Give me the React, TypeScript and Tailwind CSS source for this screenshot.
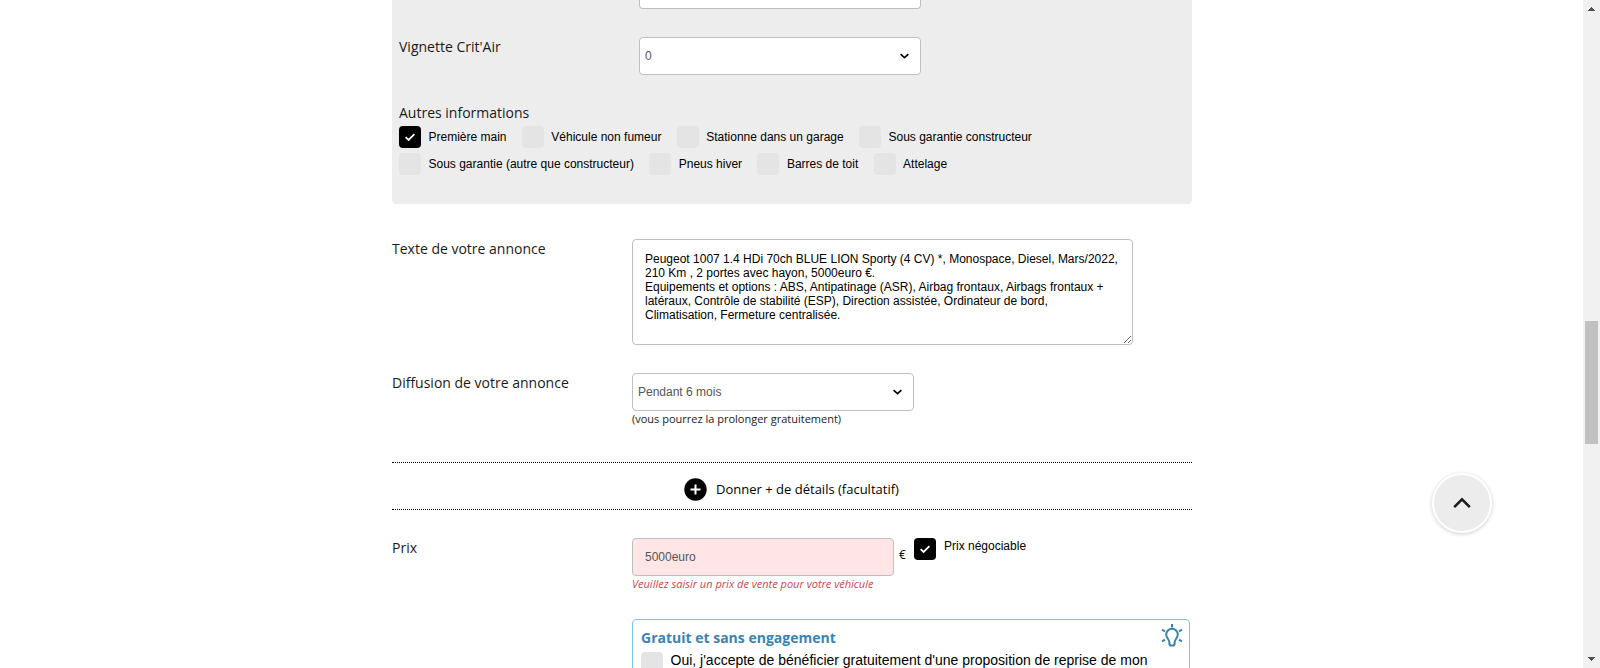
import React from "react";

const label = "w-[240px] shrink-0 font-['Open_Sans',sans-serif] text-[14px] leading-[20px] text-[#1a1a1a]";

function Check({ checked = false }: { checked?: boolean }) {
  return (
    <span
      className={
        checked
          ? "flex size-[22px] shrink-0 items-center justify-center rounded-[4px] bg-black"
          : "size-[22px] shrink-0 rounded-[4px] bg-[#e4e4e4]"
      }
    >
      {checked && (
        <svg width="12" height="10" viewBox="0 0 12 10" fill="none" stroke="#fff" strokeWidth="1.8">
          <path d="M1.6 5.2 4.6 8 10.4 2.2" />
        </svg>
      )}
    </span>
  );
}

function Option({ text, checked }: { text: string; checked?: boolean }) {
  return (
    <label className="flex gap-[7.500px]">
      <Check checked={checked} />
      <span className="whitespace-nowrap text-[12px] leading-[22px] text-black">{text}</span>
    </label>
  );
}

function Select({ value }: { value: string }) {
  return (
    <div className="flex h-[38px] w-[282px] items-center justify-between rounded-[4px] border border-[#bfbfbf] bg-white pl-[5px] pr-[11px] text-[12px] text-[#555]">
      <span>{value}</span>
      <svg width="9" height="6" viewBox="0 0 9 6" fill="none" stroke="#000" strokeWidth="1.700">
        <path d="M0.600 1.200 4.500 4.600 8.400 1.200" />
      </svg>
    </div>
  );
}

function Scrollbar() {
  return (
    <div className="flex w-[17px] shrink-0 flex-col items-center bg-[#f1f1f1]">
      <svg className="mt-[7px] shrink-0" width="7" height="4" viewBox="0 0 7 4" fill="#505050" shapeRendering="crispEdges">
        <path d="M3 0h1v1h1v1h1v1h1v1H0V3h1V2h1V1h1z" />
      </svg>
      <div className="mt-[310px] h-[123px] w-[13px] shrink-0 bg-[#c1c1c1]" />
      <svg className="mb-[7px] mt-auto shrink-0" width="7" height="4" viewBox="0 0 7 4" fill="#505050" shapeRendering="crispEdges">
        <path d="M0 0h7v1H6v1H5v1H4v1H3V3H2V2H1V1H0z" />
      </svg>
    </div>
  );
}

const AD_TEXT = `Peugeot 1007 1.4 HDi 70ch BLUE LION Sporty (4 CV) *, Monospace, Diesel, Mars/2022, 210 Km , 2 portes avec hayon, 5000euro €.
Equipements et options : ABS, Antipatinage (ASR), Airbag frontaux, Airbags frontaux + latéraux, Contrôle de stabilité (ESP), Direction assistée, Ordinateur de bord, Climatisation, Fermeture centralisée.`;

export default function App() {
  return (
    <div className="relative flex h-[668px] w-[1600px] overflow-hidden bg-white font-['Liberation_Sans',Arial,sans-serif]">
      <main className="flex-1 pl-[392px]">
        <div className="w-[800px]">
          <section className="h-[204px] rounded-b-[4px] bg-[#ededed] px-[7px]">
            <div className="ml-[240px] h-[9px] w-[282px] rounded-b-[4px] border border-t-0 border-[#bfbfbf] bg-white" />
            <div className="mt-[28px] flex h-[38px]">
              <span className={label}>Vignette Crit'Air</span>
              <Select value="0" />
            </div>
            <div className="mt-[28px] font-['Open_Sans',sans-serif] text-[14px] leading-[20px] text-[#1a1a1a]">
              Autres informations
            </div>
            <div className="mt-[3px] flex gap-[15.300px]">
              <Option text="Première main" checked />
              <Option text="Véhicule non fumeur" />
              <Option text="Stationne dans un garage" />
              <Option text="Sous garantie constructeur" />
            </div>
            <div className="mt-[5px] flex gap-[15.300px]">
              <Option text="Sous garantie (autre que constructeur)" />
              <Option text="Pneus hiver" />
              <Option text="Barres de toit" />
              <Option text="Attelage" />
            </div>
          </section>

          <div className="mt-[35px] flex">
            <span className={label}>Texte de votre annonce</span>
            <textarea
              className="h-[106px] w-[501px] resize overflow-hidden rounded-[4px] border border-[#bfbfbf] bg-white px-[12px] py-[12px] text-[12px] leading-[14px] text-black"
              defaultValue={AD_TEXT}
            />
          </div>

          <div className="mt-[28px] flex h-[89px]">
            <span className={label}>Diffusion de votre annonce</span>
            <div>
              <Select value="Pendant 6 mois" />
              <p className="font-['Open_Sans',sans-serif] text-[11px] leading-[16px] text-[#1a1a1a]">
                (vous pourrez la prolonger gratuitement)
              </p>
            </div>
          </div>

          <div className="flex h-[48px] items-center justify-center border-y border-dotted border-black pr-px pt-[6px]">
            <svg width="23" height="23" viewBox="0 0 23 23">
              <circle cx="11.5" cy="11.5" r="11.2" fill="#000" />
              <path d="M11.5 6.5v10M6.5 11.5h10" stroke="#fff" strokeWidth="2" />
            </svg>
            <span className="ml-[9px] font-['Open_Sans',sans-serif] text-[13px] leading-[20px] text-black">
              Donner + de détails (facultatif)
            </span>
          </div>

          <div className="mt-[28px] flex h-[81px]">
            <span className={label}>Prix</span>
            <div>
              <div className="flex">
                <input
                  className="h-[38px] w-[262px] rounded-[4px] border border-[#bfbfbf] bg-[#ffe5e5] px-[12px] text-[12px] text-[#555]"
                  defaultValue="5000euro"
                />
                <span className="ml-[5px] w-[15px] pt-[9px] font-['Open_Sans',sans-serif] text-[12px] leading-[16px] text-black">€</span>
                <Check checked />
                <span className="ml-[8px] text-[12px] leading-[17px] text-black">Prix négociable</span>
              </div>
              <p className="font-['Open_Sans',sans-serif] text-[11px] italic leading-[16px] text-[#d0454c]">
                Veuillez saisir un prix de vente pour votre véhicule
              </p>
            </div>
          </div>

          <div className="ml-[240px] h-[80px] w-[558px] rounded-[4px] border border-[#7cc4ea] pl-[8px] pr-[6px] pt-[4px]">
            <div className="flex h-[28px] justify-between">
              <h3 className="pt-[4px] font-['Open_Sans',sans-serif] text-[14px] font-bold leading-[20px] text-[#3b83b5]">
                Gratuit et sans engagement
              </h3>
              <svg width="22" height="23" viewBox="0 0 22 23" fill="none" stroke="#3a82a8" strokeWidth="2">
                <path d="M11 0v3.400M1 5.600l3 1.700M21 5.600l-3 1.700M1 17.400l3-1.700M21 17.400l-3-1.700" />
                <path d="M8.400 18.200C8.200 15.200 5.200 14 5.200 10.600a5.800 5.800 0 0 1 11.600 0c0 3.400-3 4.600-3.200 7.600v1.500a1.800 1.800 0 0 1-1.800 1.800h-1.600a1.800 1.800 0 0 1-1.800-1.800z" />
              </svg>
            </div>
            <div className="flex gap-[7.500px]">
              <Check />
              <span className="whitespace-nowrap text-[14px] leading-[16px] text-black">
                Oui, j'accepte de bénéficier gratuitement d'une proposition de reprise de mon
              </span>
            </div>
          </div>
        </div>
      </main>

      <Scrollbar />

      <button className="absolute left-[1432px] top-[473px] flex size-[60px] items-center justify-center rounded-full border-2 border-white bg-[#ececec] pr-px shadow-[0_1px_4px_rgba(0,0,0,0.2)]">
        <svg width="18" height="12" viewBox="0 0 18 12" fill="none" stroke="#1c1c1c" strokeWidth="2.600">
          <path d="M1.200 10.200 9 2.400l7.800 7.800" />
        </svg>
      </button>
    </div>
  );
}
